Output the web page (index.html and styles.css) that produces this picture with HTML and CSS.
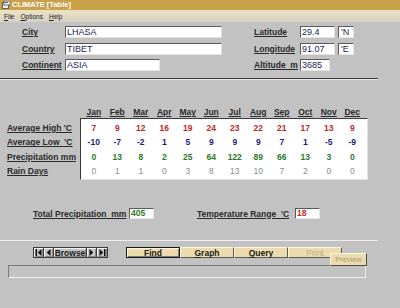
FILE: index.html
```html
<!DOCTYPE html>
<html>
<head>
<meta charset="utf-8">
<link rel="stylesheet" href="styles.css">
</head>
<body>
<div class="window">
  <div class="titlebar">
    <svg class="appicon" viewBox="0 0 8 8" width="8" height="8"><rect x="0.5" y="1.5" width="6" height="6" fill="#f4f4f4" stroke="#606060" stroke-width="1"/><rect x="2" y="0" width="6" height="4" fill="#ffffff" stroke="#404040" stroke-width="0.8"/><rect x="3" y="1" width="3" height="1" fill="#4060a0"/></svg>
    <span class="title">CLIMATE [Table]</span>
  </div>
  <div class="menubar">
    <span><u>F</u>ile</span><span><u>O</u>ptions</span><span><u>H</u>elp</span>
  </div>

  <div class="fields">
    <div class="group left">
      <div class="frow"><span class="lbl">City</span><div class="input w157">LHASA</div></div>
      <div class="frow"><span class="lbl">Country</span><div class="input w157">TIBET</div></div>
      <div class="frow"><span class="lbl">Continent</span><div class="input w95">ASIA</div></div>
    </div>
    <div class="group right">
      <div class="frow"><span class="lbl">Latitude</span><div class="input w35">29.4</div><div class="input unit">'N</div></div>
      <div class="frow"><span class="lbl">Longitude</span><div class="input w35">91.07</div><div class="input unit">'E</div></div>
      <div class="frow"><span class="lbl">Altitude&nbsp; m</span><div class="input w30">3685</div></div>
    </div>
  </div>

  <div class="sep-dark"></div>

  <div class="months">
    <span>Jan</span><span>Feb</span><span>Mar</span><span>Apr</span><span>May</span><span>Jun</span><span>Jul</span><span>Aug</span><span>Sep</span><span>Oct</span><span>Nov</span><span>Dec</span>
  </div>

  <div class="table">
    <div class="rowlabels">
      <div class="rlabel">Average High 'C</div>
      <div class="rlabel">Average Low&nbsp; 'C</div>
      <div class="rlabel">Precipitation mm</div>
      <div class="rlabel">Rain Days</div>
    </div>
    <div class="box">
      <div class="row high"><span>7</span><span>9</span><span>12</span><span>16</span><span>19</span><span>24</span><span>23</span><span>22</span><span>21</span><span>17</span><span>13</span><span>9</span></div>
      <div class="row low"><span>-10</span><span>-7</span><span>-2</span><span>1</span><span>5</span><span>9</span><span>9</span><span>9</span><span>7</span><span>1</span><span>-5</span><span>-9</span></div>
      <div class="row precip"><span>0</span><span>13</span><span>8</span><span>2</span><span>25</span><span>64</span><span>122</span><span>89</span><span>66</span><span>13</span><span>3</span><span>0</span></div>
      <div class="row rain"><span>0</span><span>1</span><span>1</span><span>0</span><span>3</span><span>8</span><span>13</span><span>10</span><span>7</span><span>2</span><span>0</span><span>0</span></div>
    </div>
  </div>

  <div class="totals">
    <span class="lbl tl1">Total Precipitation&nbsp; mm</span><div class="input w25 green">405</div>
    <span class="lbl tl2">Temperature Range&nbsp; 'C</span><div class="input w25 red">18</div>
  </div>

  <div class="sep-light"></div>

  <div class="buttons">
    <div class="nav">
      <div class="nbtn w11"><svg viewBox="0 0 7 7" width="7" height="7"><rect x="0.5" y="0" width="1.5" height="7" fill="#101010"/><polygon points="6.5,0 6.5,7 2.8,3.5" fill="#101010"/></svg></div>
      <div class="nbtn w11"><svg viewBox="0 0 7 7" width="7" height="7"><polygon points="5.5,0 5.5,7 1.8,3.5" fill="#101010"/></svg></div>
      <div class="nbtn browse">Browse</div>
      <div class="nbtn w11"><svg viewBox="0 0 7 7" width="7" height="7"><polygon points="1.5,0 1.5,7 5.2,3.5" fill="#101010"/></svg></div>
      <div class="nbtn w12"><svg viewBox="0 0 7 7" width="7" height="7"><polygon points="0.5,0 0.5,7 4.2,3.5" fill="#101010"/><rect x="5" y="0" width="1.5" height="7" fill="#101010"/></svg></div>
    </div>
    <div class="cmds">
      <div class="cbtn default">Find</div>
      <div class="cbtn"><u>G</u>raph</div>
      <div class="cbtn"><u>Q</u>uery</div>
      <div class="cbtn disabled">Print</div>
    </div>
    <div class="preview">Preview</div>
  </div>

  <div class="status"></div>
</div>
</body>
</html>
```

FILE: styles.css
```css
* { box-sizing: border-box; }
html, body { margin: 0; padding: 0; }
body {
  width: 400px;
  height: 308px;
  overflow: hidden;
  background: #c2c2c2;
  font-family: "Liberation Sans", Arial, sans-serif;
}
.window {
  width: 400px;
  height: 308px;
  background: #c2c2c2;
  position: relative;
}
.titlebar {
  height: 10px;
  background: #c9a14b;
  display: flex;
  align-items: center;
  padding-left: 2px;
}
.appicon { display: block; }
.title {
  color: #ffffff;
  font-weight: bold;
  font-size: 7.5px;
  line-height: 10px;
  margin-left: 2px;
}
.menubar {
  height: 12px;
  background: linear-gradient(#ece2c4, #d6d1c4);
  display: flex;
  align-items: center;
  gap: 6px;
  padding-left: 4px;
  font-size: 6.5px;
  color: #202020;
}
.fields {
  display: flex;
  padding: 4px 0 0 22px;
}
.group {
  display: flex;
  flex-direction: column;
  gap: 4.5px;
}
.group.right { margin-left: 32px; }
.frow {
  display: flex;
  align-items: center;
  height: 12px;
}
.lbl {
  font-size: 8.5px;
  font-weight: bold;
  color: #2a2a2a;
  text-decoration: underline;
  white-space: nowrap;
}
.left .lbl { width: 43px; }
.right .lbl { width: 46px; }
.input {
  height: 12px;
  background: #ffffff;
  border-top: 1px solid #5a5a5a;
  border-left: 1px solid #5a5a5a;
  border-right: 1px solid #e4e4e4;
  border-bottom: 1px solid #e4e4e4;
  font-size: 9px;
  line-height: 10px;
  color: #1c1c5c;
  padding-left: 1px;
  white-space: nowrap;
}
.w157 { width: 157px; }
.w95 { width: 95px; }
.w35 { width: 35px; }
.w30 { width: 30px; }
.w25 { width: 25px; height: 11px; line-height: 9px; font-weight: bold; font-size: 8.5px; }
.unit { width: 16px; margin-left: 3px; padding-left: 2px; }
.green { color: #2a7a2a; }
.red { color: #c0282c; }

.sep-dark {
  width: 378px;
  height: 2px;
  margin-top: 7px;
  border-top: 1px solid #3c3c3c;
  border-bottom: 1px solid #e8e8e8;
}

.months {
  margin-top: 27px;
  height: 10px;
  padding-left: 82px;
  display: grid;
  grid-template-columns: repeat(12, 23.5px);
  font-size: 8.5px;
  font-weight: bold;
  color: #2a2a2a;
  line-height: 10px;
  text-align: center;
}
.months span { text-decoration: underline; }

.table {
  margin-top: 1px;
  display: flex;
}
.rowlabels {
  width: 80px;
  padding: 3px 0 0 7px;
}
.rlabel {
  height: 14.3px;
  line-height: 14.3px;
  font-size: 8.5px;
  font-weight: bold;
  color: #2a2a2a;
  text-decoration: underline;
  white-space: nowrap;
}
.box {
  width: 288px;
  height: 62px;
  background: #ffffff;
  border-top: 1px solid #3a3a3a;
  border-left: 1px solid #3a3a3a;
  border-right: 1px solid #e4e4e4;
  border-bottom: 1px solid #e4e4e4;
  padding: 2px 0 0 1px;
}
.row {
  display: grid;
  grid-template-columns: repeat(12, 23.5px);
  height: 14.3px;
  line-height: 14.3px;
  font-size: 8.5px;
  font-weight: bold;
  text-align: center;
}
.high { color: #c0282c; }
.low { color: #1c1c80; }
.precip { color: #2a7a2a; }
.rain { color: #8c8c8c; font-weight: normal; }

.totals {
  margin-top: 28px;
  height: 11px;
  padding-left: 33px;
  display: flex;
  align-items: center;
}
.tl1 { width: 96px; }
.tl2 { width: 98px; margin-left: 43px; }

.sep-light {
  width: 378px;
  height: 1px;
  margin-top: 21px;
  background: #efefef;
}

.buttons {
  margin-top: 6px;
  height: 11px;
  display: flex;
  position: relative;
}
.nav {
  margin-left: 33px;
  display: flex;
  height: 11px;
}
.nbtn {
  height: 11px;
  border: 1px solid #3a3a3a;
  box-shadow: inset 1px 1px 0 #f4f4f4, inset -1px -1px 0 #8a8a8a;
  background: #c4c4c4;
  display: flex;
  align-items: center;
  justify-content: center;
  margin-right: -1px;
}
.nbtn svg { display: block; }
.w11 { width: 11px; }
.w12 { width: 12px; }
.browse {
  width: 34px;
  font-size: 8.5px;
  font-weight: bold;
  color: #202020;
}
.cmds {
  margin-left: 19px;
  display: flex;
  height: 11px;
}
.cbtn {
  width: 54px;
  height: 11px;
  background: #ecdcad;
  border-top: 1px solid #fff6de;
  border-left: 1px solid #fff6de;
  border-right: 1px solid #5a5a5a;
  border-bottom: 1px solid #5a5a5a;
  font-size: 8.5px;
  font-weight: bold;
  color: #202020;
  display: flex;
  align-items: center;
  justify-content: center;
}
.cbtn.default {
  border: 1px solid #1a1a1a;
  box-shadow: inset 1px 1px 0 #fff6de, inset -1px -1px 0 #7a7a7a;
}
.cbtn.disabled {
  color: #bcae8c;
  font-weight: normal;
}
.preview {
  position: absolute;
  left: 330px;
  top: 6px;
  width: 37px;
  height: 13px;
  background: #ecdcad;
  border-top: 1px solid #fff6de;
  border-left: 1px solid #fff6de;
  border-right: 1px solid #4a4a4a;
  border-bottom: 1px solid #4a4a4a;
  font-size: 7.5px;
  color: #a89a78;
  display: flex;
  align-items: center;
  justify-content: center;
}
.status {
  margin-top: 7px;
  margin-left: 8px;
  width: 358px;
  height: 13px;
  border-top: 1px solid #7a7a7a;
  border-left: 1px solid #7a7a7a;
  border-right: 1px solid #f0f0f0;
  border-bottom: 1px solid #f0f0f0;
}
```
